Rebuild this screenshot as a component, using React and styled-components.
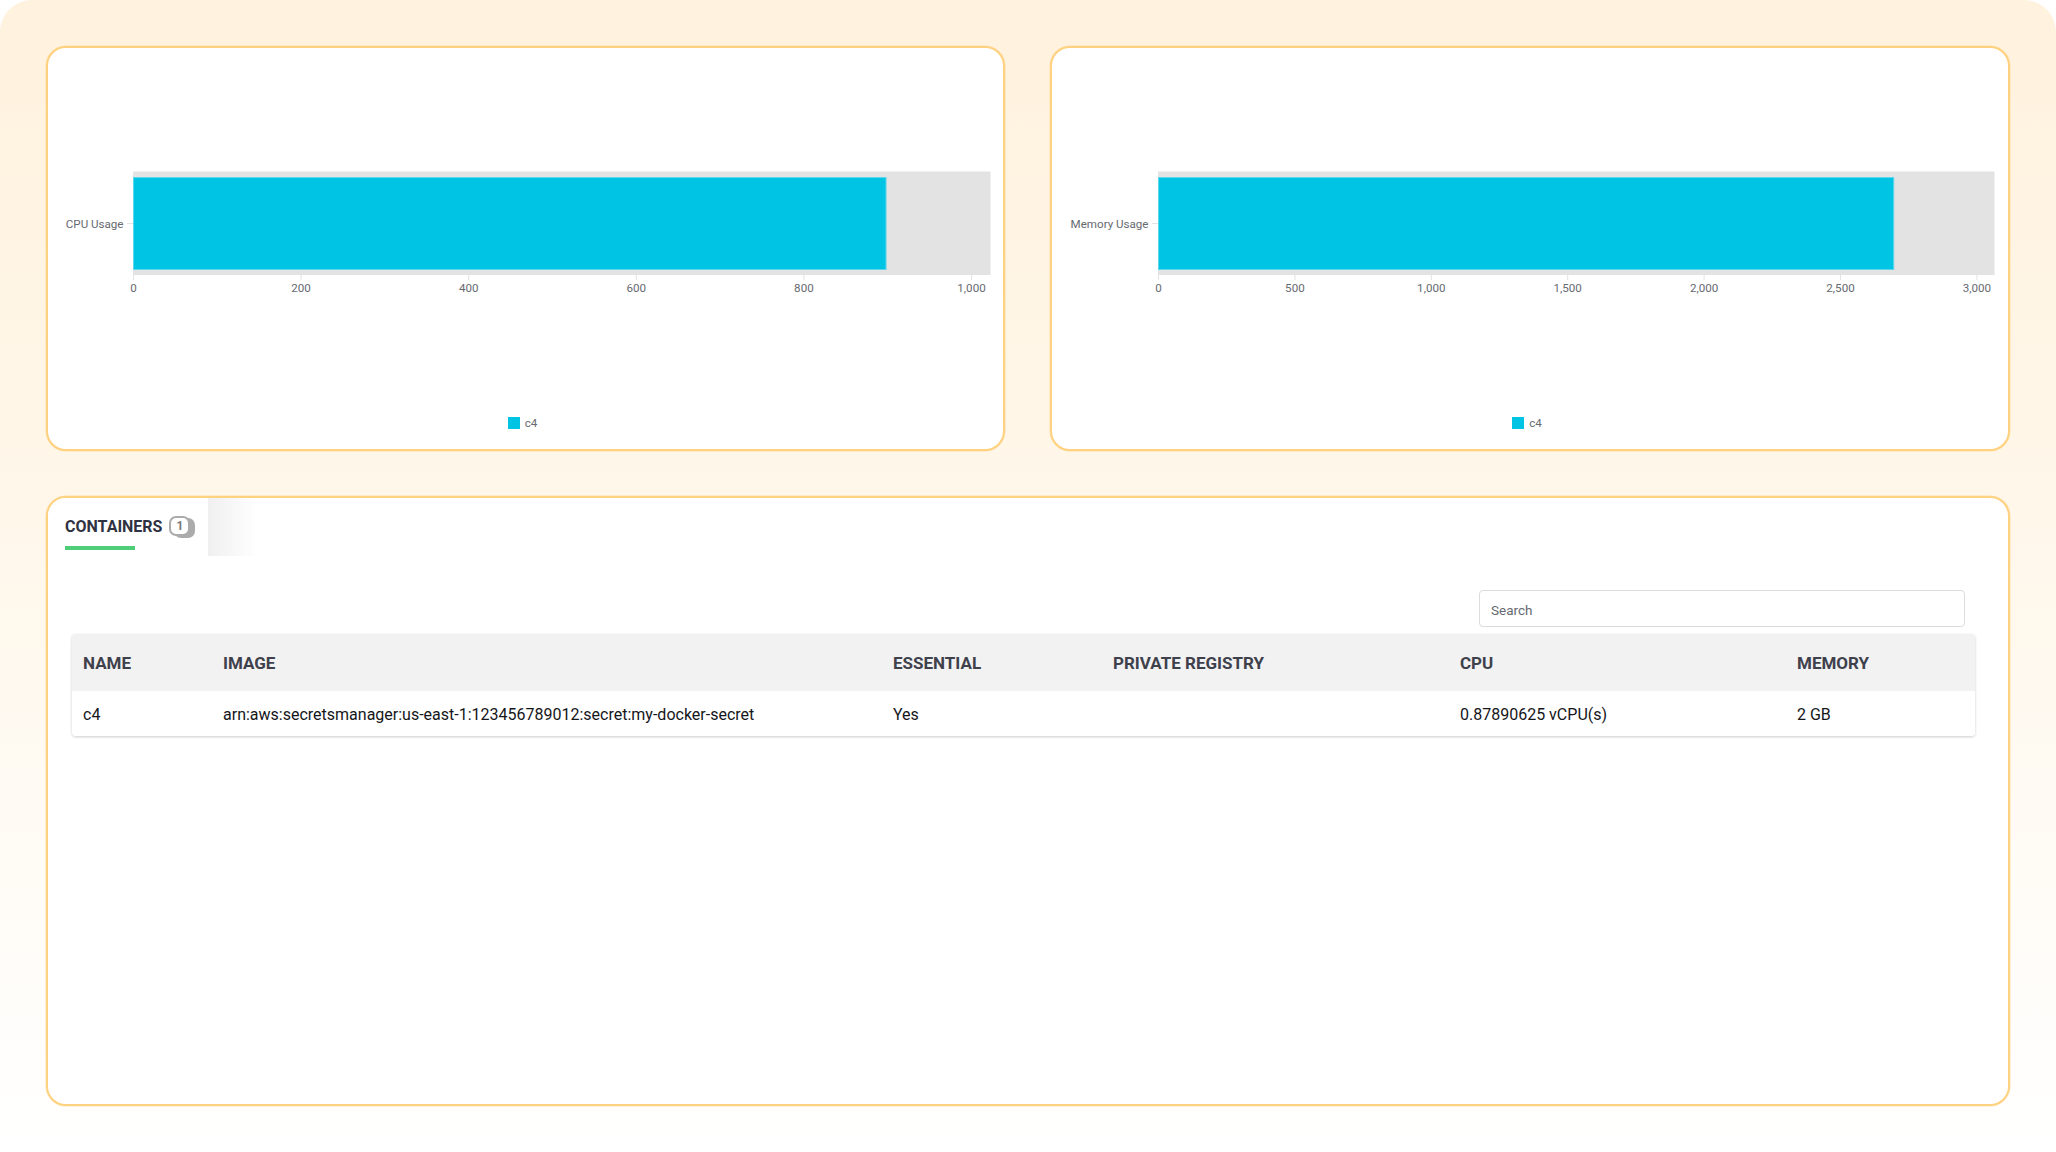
import React from "react";
import styled, { createGlobalStyle } from "styled-components";

const GlobalStyle = createGlobalStyle`
  html, body {
    margin: 0;
    padding: 0;
    background: #fff;
    font-family: Roboto, "Liberation Sans", sans-serif;
  }
  * {
    box-sizing: border-box;
  }
`;

const Page = styled.div`
  width: 2056px;
  height: 1152px;
  padding: 46px 46px 46px;
  display: flex;
  flex-direction: column;
  gap: 45px;
  border-radius: 32px 32px 0 0;
  background: linear-gradient(180deg, #fff2de 0%, #fff7ea 45%, #ffffff 100%);
  overflow: hidden;
`;

const ChartRow = styled.div`
  display: flex;
  gap: 45px;
  height: 405px;
  flex-shrink: 0;
`;

const Card = styled.section`
  background: #fff;
  border: 2px solid #ffd282;
  border-radius: 20px;
  box-shadow: 0 0 0 0.5px rgba(255, 210, 130, 0.6);
`;

const ChartCard = styled(Card)`
  width: ${(p) => p.$width}px;
  display: flex;
  flex-direction: column;
`;

const ChartSvg = styled.svg`
  display: block;
  width: 100%;
  height: 340px;
  font-family: Roboto, "Liberation Sans", sans-serif;
  font-size: 11.6px;
  fill: #666a70;
`;

const Legend = styled.div`
  display: flex;
  justify-content: center;
  align-items: center;
  gap: 5px;
  margin-top: 29px;
  padding-right: 6px;
  font-size: 11.6px;
  line-height: 12px;
  color: #666a70;
`;

const LegendSwatch = styled.span`
  width: 12px;
  height: 12px;
  background: #00c4e4;
`;

const TableCard = styled(Card)`
  flex: 1;
  display: flex;
  flex-direction: column;
`;

const Tab = styled.div`
  position: relative;
  width: 160px;
  height: 58px;
  padding: 16px 0 0 17px;
  background: #fff;
  border-radius: 18px 8px 0 0;
  &::after {
    content: "";
    position: absolute;
    top: 0;
    left: 100%;
    width: 50px;
    height: 100%;
    background: linear-gradient(90deg, #f0f0f1, #ffffff);
  }
`;

const TabLabel = styled.div`
  display: flex;
  align-items: center;
  gap: 7px;
  height: 24px;
  font-size: 16px;
  font-weight: 700;
  color: #2f3241;
`;

const Badge = styled.span`
  display: flex;
  align-items: center;
  justify-content: center;
  width: 21px;
  height: 20px;
  border: 2px solid #ababab;
  border-radius: 7px;
  background: #fff;
  box-shadow: 5px 2px 0 #ababab;
  font-size: 12px;
  font-weight: 700;
  color: #777;
`;

const TabUnderline = styled.div`
  width: 70px;
  height: 4px;
  margin-top: 8px;
  background: #4fce7a;
`;

const SearchRow = styled.div`
  display: flex;
  justify-content: flex-end;
  padding: 34px 43px 0 0;
`;

const SearchInput = styled.input`
  width: 486px;
  height: 37px;
  padding: 2px 11px 0;
  border: 1px solid #dcdcdc;
  border-radius: 4px;
  background: #fff;
  font-family: Roboto, "Liberation Sans", sans-serif;
  font-size: 13.5px;
  outline: none;
  &::placeholder {
    color: #666a70;
    opacity: 1;
  }
`;

const Table = styled.div`
  margin: 7px 33px 0 24px;
  border-radius: 4px;
  background: #fff;
  box-shadow: 0 1px 3px rgba(0, 0, 0, 0.2);
`;

const Row = styled.div`
  display: grid;
  grid-template-columns: 140px 670px 220px 347px 337px 1fr;
  align-items: center;
  height: ${(p) => (p.$head ? 57 : 45)}px;
  padding-top: ${(p) => (p.$head ? 1 : 1)}px;
  background: ${(p) => (p.$head ? "#f2f2f2" : "#fff")};
  border-radius: ${(p) => (p.$head ? "4px 4px 0 0" : "0 0 4px 4px")};
`;

const HeadCell = styled.div`
  padding-left: 11px;
  font-size: 17px;
  font-weight: 700;
  color: #3e414c;
`;

const Cell = styled.div`
  padding-left: 11px;
  font-size: 16px;
  color: #15161a;
  white-space: nowrap;
`;

const charts = [
  { label: "CPU Usage", width: 959, plotLeft: 85, unit: 0.838, value: 898, ticks: [0, 200, 400, 600, 800, 1000] },
  { label: "Memory Usage", width: 960, plotLeft: 106, unit: 0.2728, value: 2695, ticks: [0, 500, 1000, 1500, 2000, 2500, 3000] },
];

const columns = ["NAME", "IMAGE", "ESSENTIAL", "PRIVATE REGISTRY", "CPU", "MEMORY"];
const row = [
  "c4",
  "arn:aws:secretsmanager:us-east-1:123456789012:secret:my-docker-secret",
  "Yes",
  "",
  "0.87890625 vCPU(s)",
  "2 GB",
];

const Chart = ({ label, width, plotLeft, unit, value, ticks }) => {
  const xOf = (v) => plotLeft + 0.5 + v * unit;
  return (
    <ChartCard $width={width}>
      <ChartSvg>
        <rect x={plotLeft} y={123.5} width={942.5 - plotLeft} height={103.5} fill="#e3e3e3" />
        <rect x={plotLeft + 0.5} y={129.5} width={value * unit} height={92} fill="#00c4e4" stroke="#5ed6ec" strokeWidth={1} />
        <line x1={plotLeft - 6} x2={plotLeft} y1={175.5} y2={175.5} stroke="#e3e3e3" />
        <text x={plotLeft - 9.5} y={179.5} textAnchor="end">{label}</text>
        {ticks.map((t) => (
          <g key={t}>
            <line x1={xOf(t)} x2={xOf(t)} y1={227} y2={232} stroke="#e3e3e3" />
            <text x={xOf(t)} y={244} textAnchor="middle">{t.toLocaleString("en-US")}</text>
          </g>
        ))}
      </ChartSvg>
      <Legend>
        <LegendSwatch />
        c4
      </Legend>
    </ChartCard>
  );
};

const App = () => (
  <>
    <GlobalStyle />
    <Page>
      <ChartRow>
        {charts.map((c) => (
          <Chart key={c.label} {...c} />
        ))}
      </ChartRow>
      <TableCard>
        <Tab>
          <TabLabel>
            CONTAINERS
            <Badge>1</Badge>
          </TabLabel>
          <TabUnderline />
        </Tab>
        <SearchRow>
          <SearchInput placeholder="Search" />
        </SearchRow>
        <Table>
          <Row $head>
            {columns.map((c) => (
              <HeadCell key={c}>{c}</HeadCell>
            ))}
          </Row>
          <Row>
            {row.map((c, i) => (
              <Cell key={i}>{c}</Cell>
            ))}
          </Row>
        </Table>
      </TableCard>
    </Page>
  </>
);

export default App;
